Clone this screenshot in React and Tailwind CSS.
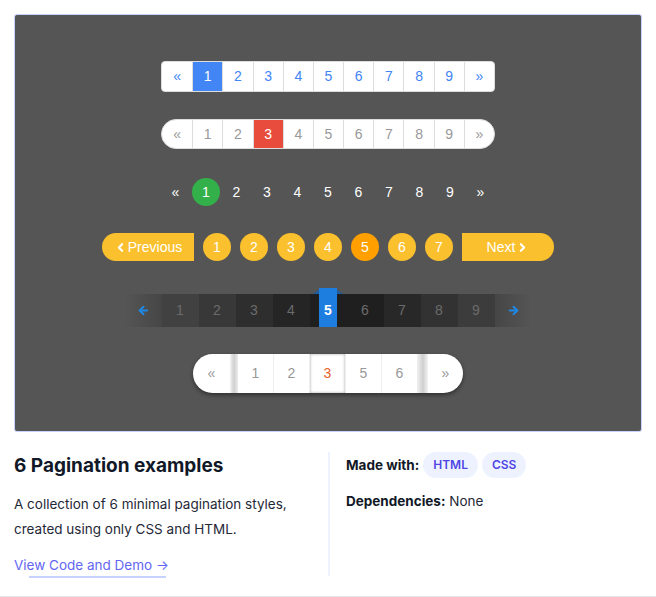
import { ArrowLeft, ArrowRight, ChevronLeft, ChevronRight } from "lucide-react";

const PAGES = ["1", "2", "3", "4", "5", "6", "7", "8", "9"];

const STRIP = [
  "bg-gradient-to-r from-[#555555] to-[#464646]",
  "bg-[#414141]",
  "bg-[#383838]",
  "bg-[#2e2e2e]",
  "bg-[#252525]",
  "",
  "bg-[#1f1f1f]",
  "bg-[#282828]",
  "bg-[#323232]",
  "bg-[#3c3c3c]",
  "bg-gradient-to-l from-[#555555] to-[#464646]",
];

function BoxedPager() {
  const items = ["«", ...PAGES, "»"];
  return (
    <div className="flex bg-white border border-[#dddddd] rounded-[4px] overflow-hidden">
      {items.map((p, i) => (
        <div
          key={i}
          className={`w-[30.2px] h-[29px] flex items-center justify-center text-[14px] ${
            i > 0 ? "border-l border-[#dddddd]" : ""
          } ${p === "1" ? "bg-[#4285f4] text-white" : "text-[#4285f4]"}`}
        >
          {p}
        </div>
      ))}
    </div>
  );
}

function PillPager() {
  const items = ["«", ...PAGES, "»"];
  return (
    <div className="flex bg-white border border-[#dddddd] rounded-full overflow-hidden">
      {items.map((p, i) => (
        <div
          key={i}
          className={`w-[30.2px] h-[28px] flex items-center justify-center text-[14px] ${
            i > 0 ? "border-l border-[#dddddd]" : ""
          } ${p === "3" ? "bg-[#e74c3c] text-white" : "text-[#999999]"}`}
        >
          {p}
        </div>
      ))}
    </div>
  );
}

function DotPager() {
  const items = ["«", ...PAGES, "»"];
  return (
    <div className="flex gap-[2.5px]">
      {items.map((p, i) => (
        <div
          key={i}
          className={`w-[28px] h-[28px] rounded-full flex items-center justify-center text-[14px] text-white ${
            p === "1" ? "bg-[#34b04a]" : ""
          }`}
        >
          {p}
        </div>
      ))}
    </div>
  );
}

function YellowPager() {
  return (
    <div className="flex items-center gap-[9px] text-white text-[14px]">
      <div className="w-[92px] h-[28px] bg-[#fbc02d] rounded-l-full flex items-center justify-center gap-[1px]">
        <ChevronLeft size={13} strokeWidth={4} />
        <span>Previous</span>
      </div>
      {["1", "2", "3", "4", "5", "6", "7"].map((p) => (
        <div
          key={p}
          className={`w-[28px] h-[28px] rounded-full flex items-center justify-center ${
            p === "5" ? "bg-[#ffa000]" : "bg-[#fbc02d]"
          }`}
        >
          {p}
        </div>
      ))}
      <div className="w-[92px] h-[28px] bg-[#fbc02d] rounded-r-full flex items-center justify-center gap-[1px]">
        <span>Next</span>
        <ChevronRight size={13} strokeWidth={4} />
      </div>
    </div>
  );
}

function StripPager() {
  const items = ["←", ...PAGES, "→"];
  return (
    <div className="flex items-end h-[39px]">
      {items.map((p, i) => {
        if (p === "5") {
          return (
            <div key={i} className="relative w-[37px] h-[39px] flex justify-center bg-[#1f1f1f] self-end">
              <div className="absolute top-0 left-0 w-[37px] h-[6px] bg-[#555555]" />
              <div className="absolute top-[2px] left-[3px] w-[31px] h-[4px] bg-[#1f5d9c] [clip-path:polygon(20%_0,80%_0,100%_100%,0_100%)]" />
              <div className="relative w-[18px] h-[39px] bg-[#1e7ee0] text-white font-bold text-[14px] flex items-center justify-center pt-[6px]">
                5
              </div>
            </div>
          );
        }
        return (
          <div
            key={i}
            className={`w-[37px] h-[33px] flex items-center justify-center text-[14px] text-[#6b6b6b] ${STRIP[i]}`}
          >
            {p === "←" ? (
              <ArrowLeft size={13} strokeWidth={3.5} className="text-[#1e88e5]" />
            ) : p === "→" ? (
              <ArrowRight size={13} strokeWidth={3.5} className="text-[#1e88e5]" />
            ) : (
              p
            )}
          </div>
        );
      })}
    </div>
  );
}

function ShadowPager() {
  return (
    <div className="flex items-stretch h-[39px] bg-white rounded-full overflow-hidden shadow-[0_2px_4px_rgba(0,0,0,0.45)] text-[14px] text-[#999999]">
      <div className="w-[37px] flex items-center justify-center">«</div>
      <div className="w-[8px] bg-gradient-to-r from-[#f3f3f3] via-[#cfcfcf] to-[#ececec]" />
      {["1", "2", "3", "5", "6"].map((p) => (
        <div
          key={p}
          className={`w-[36px] flex items-center justify-center border-r border-[#eeeeee] ${
            p === "3"
              ? "text-[#e8622c] shadow-[inset_0_0_3px_rgba(0,0,0,0.35)]"
              : ""
          }`}
        >
          {p}
        </div>
      ))}
      <div className="w-[10px] bg-gradient-to-r from-[#ececec] via-[#cfcfcf] to-[#f3f3f3]" />
      <div className="w-[35px] flex items-center justify-center">»</div>
    </div>
  );
}

export default function App() {
  return (
    <div className="w-[656px] h-[597px] bg-white border-b border-[#e5e7eb] [font-family:Inter,'Noto_Sans',sans-serif]">
      <div className="pt-[14px] px-[14px]">
        {/* Preview */}
        <div className="h-[418px] bg-[#555555] border border-[#c7d2fe] rounded-[3px] flex flex-col items-center pt-[46px] [font-family:'Liberation_Sans',Arial,sans-serif]">
          <BoxedPager />
          <div className="mt-[27px]">
            <PillPager />
          </div>
          <div className="mt-[29px]">
            <DotPager />
          </div>
          <div className="mt-[27px]">
            <YellowPager />
          </div>
          <div className="mt-[27px]">
            <StripPager />
          </div>
          <div className="mt-[27px]">
            <ShadowPager />
          </div>
        </div>
      </div>

      {/* Info */}
      <div className="flex pl-[14px] pt-[20px]">
        <div className="w-[314px] pr-[16px]">
          <h2 className="text-[19px] font-bold text-[#111827] leading-[28px]">
            6 Pagination examples
          </h2>
          <p className="mt-[12px] text-[13.5px] leading-[25px] text-[#1f2937]">
            A collection of 6 minimal pagination styles, created using only CSS and HTML.
          </p>
          <div className="mt-[10px]">
            <a className="text-[13.5px] text-[#6366f1] leading-[22px]">View Code and Demo →</a>
            <div className="ml-[15px] w-[137px] h-[2px] bg-[#c7d2fe]" />
          </div>
        </div>
        <div className="w-[2px] h-[124px] bg-[#eef2ff]" />
        <div className="pl-[16px]">
          <div className="flex items-center gap-[4px]">
            <span className="text-[13.5px] font-bold text-[#111827]">Made with:</span>
            <span className="h-[26px] px-[10px] rounded-full bg-[#eef2ff] text-[#4f46e5] text-[12px] font-semibold flex items-center">
              HTML
            </span>
            <span className="h-[26px] px-[10px] rounded-full bg-[#eef2ff] text-[#4f46e5] text-[12px] font-semibold flex items-center">
              CSS
            </span>
          </div>
          <div className="mt-[13px] text-[13.5px] text-[#1f2937]">
            <span className="font-bold text-[#111827]">Dependencies:</span> None
          </div>
        </div>
      </div>
    </div>
  );
}
